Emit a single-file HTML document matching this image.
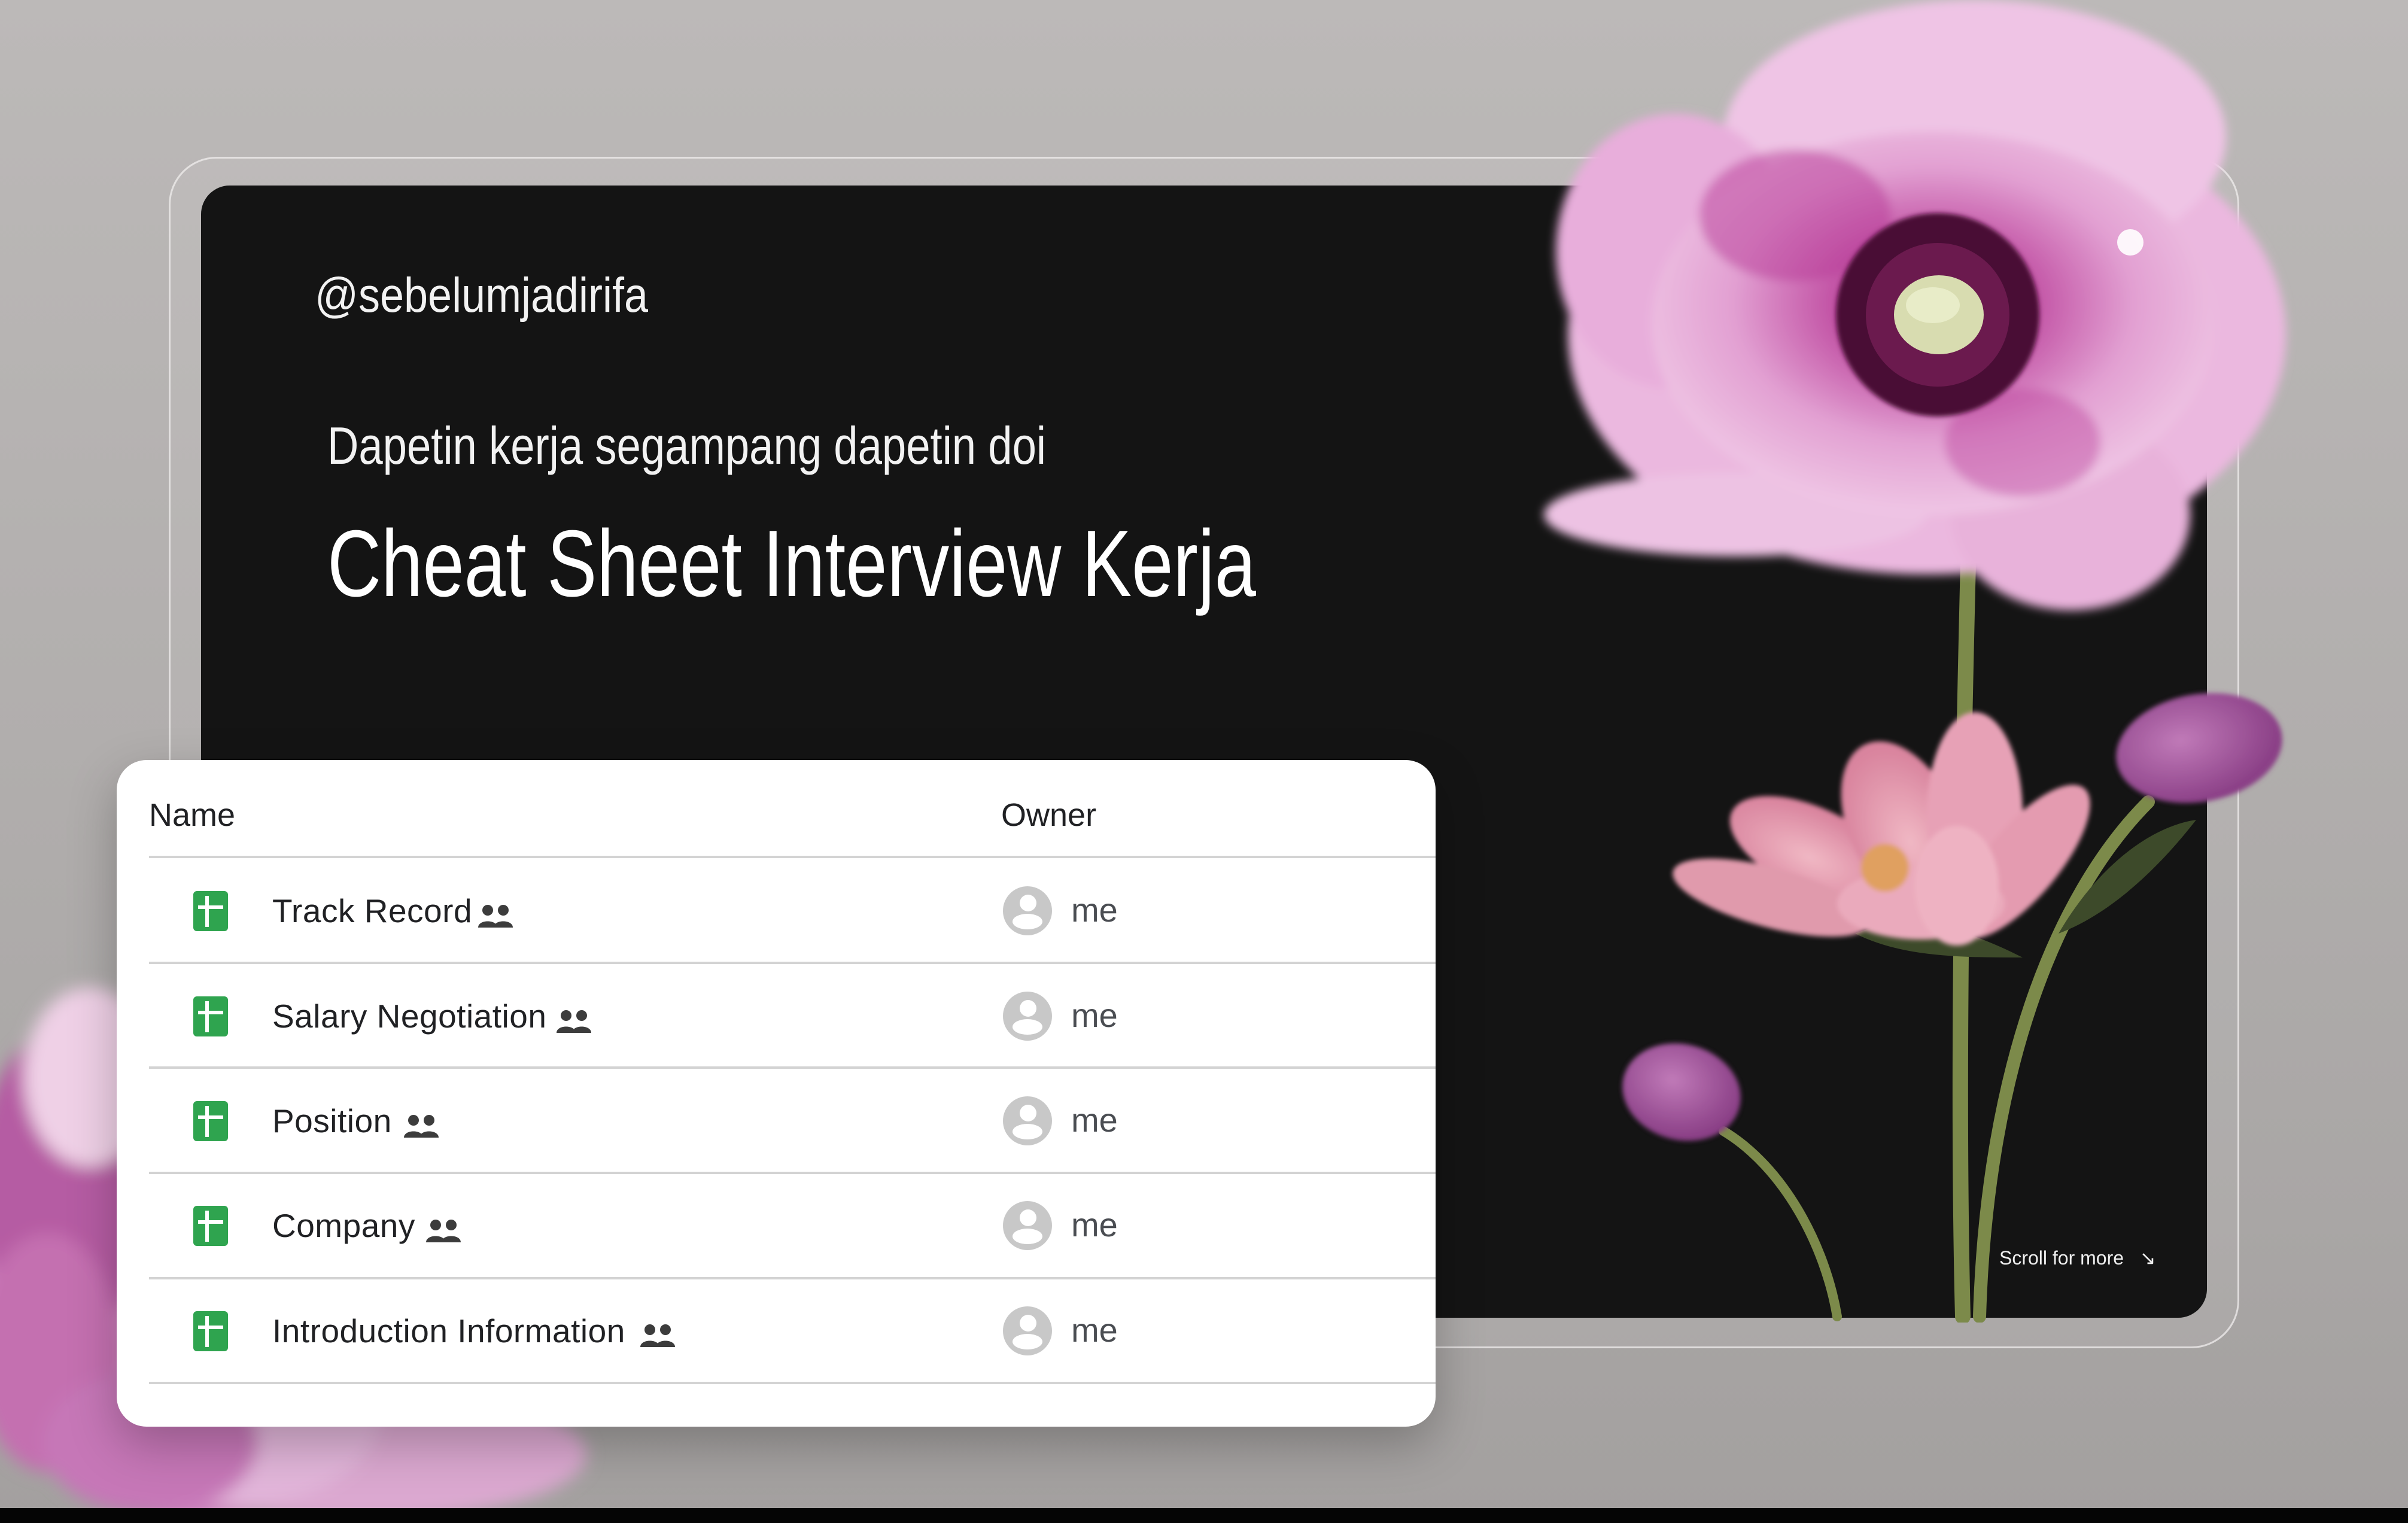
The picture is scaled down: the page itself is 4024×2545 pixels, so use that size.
<!DOCTYPE html>
<html><head><meta charset="utf-8"><style>
html,body{margin:0;padding:0}
body{width:4024px;height:2545px;position:relative;overflow:hidden;font-family:"Liberation Sans",sans-serif;
background:linear-gradient(180deg,#bcb9b8 0%,#b2afae 45%,#a9a6a5 80%,#a3a09f 100%);}
.abs{position:absolute}
.frame{left:282px;top:262px;width:3460px;height:1991px;border:3px solid rgba(240,238,238,.75);border-radius:80px;background:rgba(255,255,255,.06);box-sizing:border-box}
.panel{left:336px;top:310px;width:3352px;height:1892px;background:#141414;border-radius:48px}
.card{left:195px;top:1270px;width:2204px;height:1114px;background:#fff;border-radius:50px;box-shadow:0 30px 80px rgba(0,0,0,.25)}
.hl{left:249px;width:2150px;height:4px;background:#d3d3d3}
.hd{font-size:54px;color:#202124;top:1331px}
.nm{left:455px;font-size:55px;color:#202124;letter-spacing:.5px}
.me{left:1790px;font-size:56px;color:#4a4d52}
</style></head><body>
<!-- left flower -->
<svg class="abs" style="left:0;top:1560px" width="1050" height="980">
<defs><filter id="b1"><feGaussianBlur stdDeviation="14"/></filter></defs>
<g filter="url(#b1)">
<ellipse cx="330" cy="600" rx="400" ry="380" fill="#cf86c0"/>
<ellipse cx="110" cy="420" rx="150" ry="260" fill="#b55ba3"/>
<ellipse cx="150" cy="240" rx="110" ry="150" fill="#efd0e6"/>
<ellipse cx="80" cy="700" rx="120" ry="200" fill="#c46fb0"/>
<ellipse cx="600" cy="870" rx="380" ry="110" fill="#dba8d0"/>
<ellipse cx="420" cy="790" rx="220" ry="160" fill="#e2b6da"/>
<ellipse cx="250" cy="850" rx="180" ry="120" fill="#c677b7"/>
</g></svg>
<div class="abs frame"></div>
<div class="abs panel"></div>
<!-- texts -->
<svg class="abs" style="left:0;top:0" width="2400" height="1100">
<text x="526" y="521" font-size="82" fill="#f2f2f2" textLength="557" lengthAdjust="spacingAndGlyphs" font-family="Liberation Sans">@sebelumjadirifa</text>
<text x="547" y="775" font-size="88" fill="#f2f2f2" textLength="1201" lengthAdjust="spacingAndGlyphs" font-family="Liberation Sans">Dapetin kerja segampang dapetin doi</text>
<text x="547" y="996" font-size="158" fill="#ffffff" textLength="1552" lengthAdjust="spacingAndGlyphs" font-family="Liberation Sans">Cheat Sheet Interview Kerja</text>
</svg>
<!-- right flowers -->
<svg class="abs" style="left:2480px;top:0" width="1544" height="2210">
<defs>
<filter id="b2"><feGaussianBlur stdDeviation="8"/></filter>
<filter id="b3"><feGaussianBlur stdDeviation="4"/></filter>
<radialGradient id="pet" cx="50%" cy="45%" r="55%"><stop offset="0" stop-color="#9a1a7c"/><stop offset=".3" stop-color="#c04ea2"/><stop offset=".65" stop-color="#e2a0d2"/><stop offset="1" stop-color="#efc6e5"/></radialGradient>
<radialGradient id="mag" cx="50%" cy="60%" r="55%"><stop offset="0" stop-color="#f0b8c4"/><stop offset="1" stop-color="#d9849e"/></radialGradient>
<radialGradient id="bud" cx="40%" cy="40%" r="60%"><stop offset="0" stop-color="#c07ab8"/><stop offset="1" stop-color="#8a3f86"/></radialGradient>
</defs>
<g transform="translate(100 0)">
<!-- stems -->
<g fill="none" stroke="#7c8a4a" stroke-linecap="round">
<path d="M710 900 C700 1300 690 1800 700 2200" stroke-width="26"/>
<path d="M1010 1340 C850 1500 740 1800 728 2200" stroke-width="22"/>
<path d="M300 1890 C400 1950 470 2080 490 2200" stroke-width="16"/>
</g>
<path d="M520 1560 C620 1520 720 1560 800 1600 C700 1600 600 1600 520 1560Z" fill="#3d4a2a"/>
<path d="M860 1560 C930 1440 1020 1380 1090 1370 C1020 1460 940 1530 860 1560Z" fill="#3d4a2a"/>
<!-- magnolia -->
<g filter="url(#b3)">
<ellipse cx="450" cy="1420" rx="150" ry="70" fill="url(#mag)" transform="rotate(25 450 1420)"/>
<ellipse cx="380" cy="1500" rx="170" ry="50" fill="#e09aac" transform="rotate(15 380 1500)"/>
<ellipse cx="600" cy="1380" rx="90" ry="150" fill="url(#mag)" transform="rotate(-25 600 1380)"/>
<ellipse cx="720" cy="1360" rx="80" ry="170" fill="#e7a1b6"/>
<ellipse cx="800" cy="1440" rx="60" ry="160" fill="#e49bb0" transform="rotate(40 800 1440)"/>
<ellipse cx="630" cy="1510" rx="140" ry="60" fill="#eaaabc"/>
<ellipse cx="690" cy="1480" rx="70" ry="100" fill="#eeb2c2"/>
<circle cx="570" cy="1450" r="40" fill="#e0a060"/>
</g>
<!-- buds -->
<g filter="url(#b3)">
<ellipse cx="1095" cy="1250" rx="140" ry="90" fill="url(#bud)" transform="rotate(-10 1095 1250)"/>
<ellipse cx="230" cy="1825" rx="100" ry="80" fill="url(#bud)" transform="rotate(15 230 1825)"/>
</g>
<!-- big flower -->
<g filter="url(#b2)">
<ellipse cx="640" cy="560" rx="600" ry="400" fill="#ebb8df"/>
<ellipse cx="720" cy="230" rx="420" ry="230" fill="#efc4e5"/>
<ellipse cx="880" cy="860" rx="200" ry="160" fill="#e8b2da"/>
<ellipse cx="320" cy="860" rx="320" ry="70" fill="#edc2e3"/>
<ellipse cx="220" cy="420" rx="200" ry="230" fill="#e8aedb"/>
<ellipse cx="650" cy="540" rx="470" ry="320" fill="url(#pet)"/>
<ellipse cx="420" cy="360" rx="160" ry="110" fill="#b83c98" opacity=".5"/>
<ellipse cx="800" cy="740" rx="130" ry="90" fill="#b83c98" opacity=".4"/>
</g>
<circle cx="658" cy="526" r="170" fill="#4a0c35" filter="url(#b3)"/>
<circle cx="658" cy="526" r="120" fill="#6b1a4e"/>
<ellipse cx="660" cy="526" rx="75" ry="66" fill="#d8dcb0"/>
<ellipse cx="650" cy="510" rx="45" ry="30" fill="#e8ecc8"/>
<circle cx="980" cy="405" r="22" fill="#fff" opacity=".9"/>
</g>
</svg>
<div class="abs" style="left:3341px;top:2083px;font-size:32px;color:#eee">Scroll for more &nbsp;&nbsp;↘</div>
<!-- bottom bar -->
<div class="abs" style="left:0;top:2520px;width:4024px;height:25px;background:#050505"></div>
<!-- card -->
<div class="abs card"></div>
<div class="abs hd" style="left:249px">Name</div>
<div class="abs hd" style="left:1673px">Owner</div>
<div class="abs hl" style="top:1430px"></div>
<div class="abs hl" style="top:1607px"></div>
<div class="abs hl" style="top:1782px"></div>
<div class="abs hl" style="top:1958px"></div>
<div class="abs hl" style="top:2134px"></div>
<div class="abs hl" style="top:2309px"></div>
<svg class="abs" style="left:0;top:0" width="2400" height="2400">
<defs>
<g id="sh"><rect x="0" y="0" width="58" height="67" rx="6" fill="#2fa44f"/><rect x="20" y="8" width="6" height="52" fill="#fff"/><rect x="8" y="24" width="42" height="6" fill="#fff"/></g>
<g id="pp" fill="#3c3c3c"><circle cx="16" cy="9" r="9"/><circle cx="42" cy="9" r="9"/><path d="M0 38 C0 24 32 24 32 38Z"/><path d="M26 38 C26 24 58 24 58 38Z"/></g>
<g id="av"><circle cx="0" cy="0" r="41" fill="#c8c8c8"/><circle cx="1" cy="-13" r="14" fill="#fff"/><ellipse cx="0" cy="18" rx="25" ry="13" fill="#fff"/></g>
</defs>
<use href="#sh" x="323" y="1489"/><use href="#av" x="1717" y="1522"/>
<use href="#sh" x="323" y="1665"/><use href="#av" x="1717" y="1698"/>
<use href="#sh" x="323" y="1840"/><use href="#av" x="1717" y="1873"/>
<use href="#sh" x="323" y="2015"/><use href="#av" x="1717" y="2048"/>
<use href="#sh" x="323" y="2191"/><use href="#av" x="1717" y="2224"/>
<use href="#pp" x="799" y="1512"/>
<use href="#pp" x="930" y="1688"/>
<use href="#pp" x="675" y="1863"/>
<use href="#pp" x="712" y="2038"/>
<use href="#pp" x="1070" y="2213"/>
</svg>
<div class="abs nm" style="top:1490px">Track Record</div>
<div class="abs nm" style="top:1666px">Salary Negotiation</div>
<div class="abs nm" style="top:1841px">Position</div>
<div class="abs nm" style="top:2016px">Company</div>
<div class="abs nm" style="top:2192px">Introduction Information</div>
<div class="abs me" style="top:1488px">me</div>
<div class="abs me" style="top:1664px">me</div>
<div class="abs me" style="top:1839px">me</div>
<div class="abs me" style="top:2014px">me</div>
<div class="abs me" style="top:2190px">me</div>
</body></html>
